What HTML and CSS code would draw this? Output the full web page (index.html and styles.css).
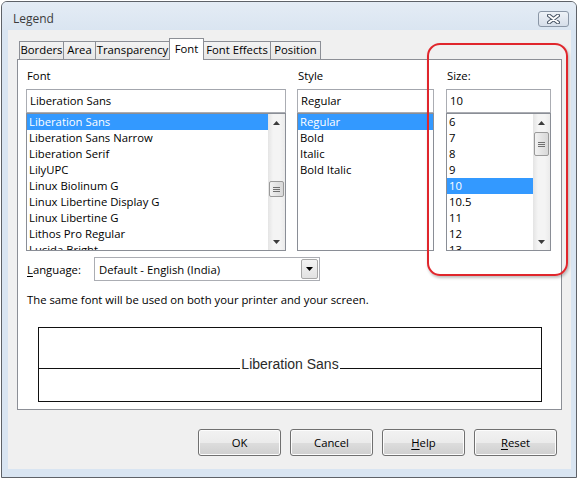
FILE: index.html
```html
<!DOCTYPE html>
<html>
<head>
<meta charset="utf-8">
<link rel="stylesheet" href="styles.css">
</head>
<body>
<div class="window">
  <div class="titlebar">
    <span class="title">Legend</span>
    <div class="close">
      <svg width="13" height="10" viewBox="0 0 13 10">
        <path d="M2 1.5 L11 8.5 M11 1.5 L2 8.5" stroke="#4a5666" stroke-width="4" stroke-linecap="round"/>
        <path d="M2 1.5 L11 8.5 M11 1.5 L2 8.5" stroke="#ffffff" stroke-width="2" stroke-linecap="round"/>
      </svg>
    </div>
  </div>
  <div class="client">
    <div class="tabs">
      <div class="tab t-borders">Borders</div>
      <div class="tab t-area">Area</div>
      <div class="tab t-transp">Transparency</div>
      <div class="tab t-font active">Font</div>
      <div class="tab t-effects">Font Effects</div>
      <div class="tab t-position">Position</div>
    </div>
    <div class="panel">
      <div class="cols">
        <div class="col col-font">
          <div class="label">Font</div>
          <div class="field">Liberation Sans</div>
          <div class="list">
            <div class="rows">
              <div class="row sel">Liberation Sans</div>
              <div class="row">Liberation Sans Narrow</div>
              <div class="row">Liberation Serif</div>
              <div class="row">LilyUPC</div>
              <div class="row">Linux Biolinum G</div>
              <div class="row">Linux Libertine Display G</div>
              <div class="row">Linux Libertine G</div>
              <div class="row">Lithos Pro Regular</div>
              <div class="row">Lucida Bright</div>
            </div>
            <div class="scrollbar">
              <div class="arrow"><svg width="7" height="4" viewBox="0 0 7 4"><path d="M0 4 L3.5 0 L7 4 Z" fill="#3c3c3c"/></svg></div>
              <div class="track">
                <div class="thumb thumb-font"><span></span><span></span><span></span></div>
              </div>
              <div class="arrow"><svg width="7" height="4" viewBox="0 0 7 4"><path d="M0 0 L3.5 4 L7 0 Z" fill="#3c3c3c"/></svg></div>
            </div>
          </div>
        </div>
        <div class="col col-style">
          <div class="label">Style</div>
          <div class="field">Regular</div>
          <div class="list">
            <div class="rows">
              <div class="row sel">Regular</div>
              <div class="row">Bold</div>
              <div class="row">Italic</div>
              <div class="row">Bold Italic</div>
            </div>
          </div>
        </div>
        <div class="col col-size">
          <div class="label">Size:</div>
          <div class="field">10</div>
          <div class="list">
            <div class="rows">
              <div class="row">6</div>
              <div class="row">7</div>
              <div class="row">8</div>
              <div class="row">9</div>
              <div class="row sel">10</div>
              <div class="row">10.5</div>
              <div class="row">11</div>
              <div class="row">12</div>
              <div class="row">13</div>
            </div>
            <div class="scrollbar">
              <div class="arrow"><svg width="7" height="4" viewBox="0 0 7 4"><path d="M0 4 L3.5 0 L7 4 Z" fill="#3c3c3c"/></svg></div>
              <div class="track">
                <div class="thumb thumb-size"><span></span><span></span><span></span></div>
              </div>
              <div class="arrow"><svg width="7" height="4" viewBox="0 0 7 4"><path d="M0 0 L3.5 4 L7 0 Z" fill="#3c3c3c"/></svg></div>
            </div>
          </div>
        </div>
      </div>
      <div class="lang-row">
        <span class="lang-label"><u>L</u>anguage:</span>
        <div class="combo">
          <span class="combo-text">Default - English (India)</span>
          <div class="combo-btn"><svg width="7" height="4" viewBox="0 0 7 4"><path d="M0 0 L3.5 4 L7 0 Z" fill="#000"/></svg></div>
        </div>
      </div>
      <p class="note">The same font will be used on both your printer and your screen.</p>
      <div class="preview">
        <div class="preview-line">
          <span class="seg"></span>
          <span class="sample">Liberation Sans</span>
          <span class="seg"></span>
        </div>
      </div>
    </div>
    <div class="buttons">
      <div class="btn">OK</div>
      <div class="btn">Cancel</div>
      <div class="btn"><u>H</u>elp</div>
      <div class="btn"><u>R</u>eset</div>
    </div>
  </div>
</div>
<div class="highlight"></div>
</body>
</html>
```

FILE: styles.css
```css
html, body {
  margin: 0;
  padding: 0;
}
body {
  width: 578px;
  height: 480px;
  overflow: hidden;
  background: #ffffff;
  font-family: "Open Sans", "Noto Sans", sans-serif;
  font-size: 11.3px;
  color: #000;
  position: relative;
  padding: 1px;
  box-sizing: border-box;
}
.window {
  width: 576px;
  height: 477px;
  box-sizing: border-box;
  border: 1px solid #5e6268;
  border-radius: 6px 6px 0 0;
  background: #d9e5f2;
  display: flex;
  flex-direction: column;
}
.titlebar {
  height: 28px;
  display: flex;
  align-items: flex-start;
  justify-content: space-between;
  background: linear-gradient(#e4ecf5, #dae5f1);
  border-radius: 5px 5px 0 0;
}
.title {
  margin: 9px 0 0 11px;
  font-size: 12px;
  line-height: 16px;
  color: #3b3b3b;
}
.close {
  width: 31px;
  height: 16px;
  margin: 9px 7px 0 0;
  box-sizing: border-box;
  border: 1px solid #8a96a6;
  border-radius: 3px;
  background: linear-gradient(#eef2f7, #d6dee9);
  display: flex;
  align-items: center;
  justify-content: center;
}
.client {
  margin: 0 5px 0 6px;
  height: 439px;
  background: #f0f0f0;
  padding: 8px 9px 0 9px;
  box-sizing: border-box;
}
.tabs {
  display: flex;
  align-items: flex-end;
  height: 21px;
  padding-left: 2px;
}
.tab {
  height: 18px;
  box-sizing: border-box;
  border: 1px solid #8c8f96;
  border-bottom: none;
  background: linear-gradient(#f3f3f3, #e6e6e6);
  margin-left: -1px;
  text-align: center;
  line-height: 16px;
  white-space: nowrap;
}
.tab.t-borders { margin-left: 0; width: 45px; }
.t-area { width: 33px; }
.t-transp { width: 75px; }
.t-font { width: 35px; }
.t-effects { width: 68px; }
.t-position { width: 51px; }
.tab.active {
  height: 22px;
  background: #ffffff;
  margin-bottom: -1px;
  position: relative;
  z-index: 1;
  line-height: 19px;
}
.panel {
  height: 351px;
  box-sizing: border-box;
  border: 1px solid #8c8f96;
  background: #ffffff;
  padding: 8px 0 0 8px;
}
.cols {
  display: flex;
}
.col {
  display: flex;
  flex-direction: column;
}
.col-font { width: 260px; }
.col-style { width: 137px; margin-left: 11px; }
.col-size { width: 105px; margin-left: 12px; }
.label {
  line-height: 16px;
  height: 16px;
  padding-left: 1px;
  margin-bottom: 5px;
}
.field {
  height: 24px;
  box-sizing: border-box;
  border: 1px solid #abadb3;
  border-top-color: #a3a6ad;
  line-height: 22px;
  padding-left: 3px;
  white-space: nowrap;
  overflow: hidden;
}
.list {
  height: 138px;
  box-sizing: border-box;
  border: 1px solid #8a8e96;
  display: flex;
  overflow: hidden;
}
.rows {
  flex: 1;
  overflow: hidden;
}
.row {
  height: 16px;
  line-height: 16px;
  padding-left: 2px;
  white-space: nowrap;
}
.row.sel {
  background: #3399ff;
  color: #ffffff;
}
.scrollbar {
  width: 17px;
  display: flex;
  flex-direction: column;
  background: linear-gradient(90deg, #e4e4e4, #f4f4f4 30%, #f4f4f4 70%, #ebebeb);
}
.arrow {
  height: 17px;
  display: flex;
  align-items: center;
  justify-content: center;
}
.track {
  flex: 1;
}
.thumb {
  margin-left: 1px;
  width: 15px;
  box-sizing: border-box;
  border: 1px solid #9a9a9a;
  border-radius: 2px;
  background: linear-gradient(90deg, #f2f2f2, #e4e4e4 50%, #d8d8d8);
  display: flex;
  flex-direction: column;
  align-items: center;
  justify-content: center;
  gap: 1px;
}
.thumb span {
  width: 7px;
  height: 1px;
  background: #707070;
}
.thumb-font { margin-top: 50px; height: 16px; }
.thumb-size { margin-top: 1px; height: 24px; }
.lang-row {
  display: flex;
  align-items: center;
  margin-top: 6px;
  height: 24px;
}
.lang-label {
  width: 68px;
  padding-left: 1px;
  box-sizing: border-box;
}
.lang-label u, .btn u {
  text-decoration: underline;
  text-underline-offset: 2px;
}
.combo {
  width: 226px;
  height: 24px;
  box-sizing: border-box;
  border: 1px solid #abadb3;
  display: flex;
  align-items: center;
  justify-content: space-between;
  background: #ffffff;
}
.combo-text {
  padding-left: 4px;
}
.combo-btn {
  width: 17px;
  height: 20px;
  margin-right: 1px;
  box-sizing: border-box;
  border: 1px solid #a7a7a7;
  border-radius: 2px;
  background: linear-gradient(#f4f4f4, #e2e2e2);
  display: flex;
  align-items: center;
  justify-content: center;
}
.note {
  margin: 11px 0 0 0;
  line-height: 16px;
  padding-left: 1px;
}
.preview {
  margin: 19px 0 0 12px;
  width: 504px;
  height: 75px;
  box-sizing: border-box;
  border: 1px solid #111111;
}
.preview-line {
  display: flex;
  align-items: flex-end;
  height: 41px;
}
.seg {
  flex: 1;
  border-bottom: 1px solid #111111;
}
.sample {
  font-family: "Liberation Sans", Arial, sans-serif;
  font-size: 14px;
  line-height: 14px;
  color: #2a2a2a;
  margin-bottom: -2px;
  padding: 0 1px;
}
.buttons {
  display: flex;
  justify-content: flex-end;
  gap: 9px;
  margin: 19px 5px 0 0;
}
.btn {
  width: 83px;
  height: 27px;
  box-sizing: border-box;
  border: 1px solid #707070;
  border-radius: 3px;
  background: linear-gradient(#f2f2f2 0%, #ebebeb 50%, #dddddd 51%, #cfcfcf 100%);
  box-shadow: inset 0 0 0 1px #fcfcfc;
  display: flex;
  align-items: center;
  justify-content: center;
}
.highlight {
  position: absolute;
  left: 427px;
  top: 43px;
  width: 141px;
  height: 233px;
  box-sizing: border-box;
  border: 2px solid #e0262c;
  border-radius: 13px;
  box-shadow: 1px 2px 3px rgba(0, 0, 0, 0.25);
}
```
